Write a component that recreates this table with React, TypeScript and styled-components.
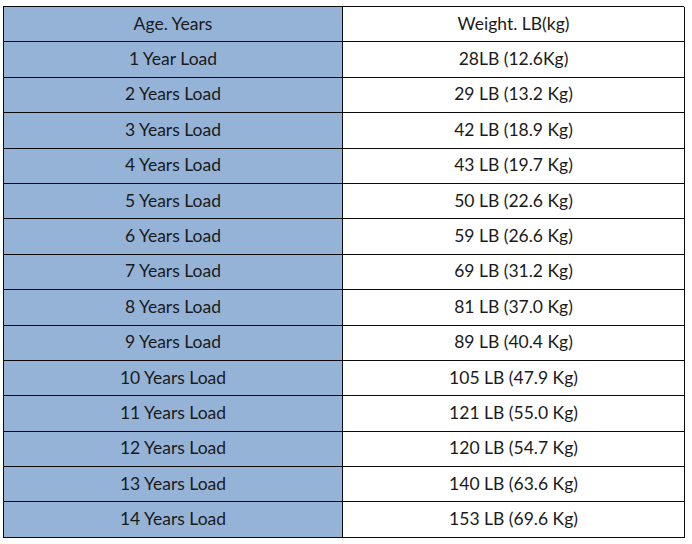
import React from "react";
import styled, { createGlobalStyle } from "styled-components";

const Global = createGlobalStyle`
  html, body { margin: 0; padding: 0; background: #fff; }
`;

const Page = styled.div`
  padding: 6px 0 0 3px;
`;

const Table = styled.div`
  display: grid;
  grid-template-columns: 339px 342px;
  grid-auto-rows: 35.4px;
  width: 681px;
  box-sizing: border-box;
  border-top: 1.5px solid #0a0a0a;
  border-left: 1.5px solid #0a0a0a;
  font-family: Lato, "Open Sans", sans-serif;
  font-size: 17.5px;
  color: #1a1a1a;
`;

const Cell = styled.div<{ $blue?: boolean }>`
  display: flex;
  align-items: center;
  justify-content: center;
  padding-bottom: 2px;
  background: ${(p) => (p.$blue ? "#95b3d7" : "#ffffff")};
  border-right: 1.5px solid #0a0a0a;
  border-bottom: 1.5px solid #0a0a0a;
  box-sizing: border-box;
`;

const rows: [string, string][] = [
  ["Age. Years", "Weight. LB(kg)"],
  ["1 Year Load", "28LB (12.6Kg)"],
  ["2 Years Load", "29 LB (13.2 Kg)"],
  ["3 Years Load", "42 LB (18.9 Kg)"],
  ["4 Years Load", "43 LB (19.7 Kg)"],
  ["5 Years Load", "50 LB (22.6 Kg)"],
  ["6 Years Load", "59 LB (26.6 Kg)"],
  ["7 Years Load", "69 LB (31.2 Kg)"],
  ["8 Years Load", "81 LB (37.0 Kg)"],
  ["9 Years Load", "89 LB (40.4 Kg)"],
  ["10 Years Load", "105 LB (47.9 Kg)"],
  ["11 Years Load", "121 LB (55.0 Kg)"],
  ["12 Years Load", "120 LB (54.7 Kg)"],
  ["13 Years Load", "140 LB (63.6 Kg)"],
  ["14 Years Load", "153 LB (69.6 Kg)"],
];

export default function App() {
  return (
    <Page>
      <Global />
      <Table>
        {rows.map(([a, b], i) => (
          <React.Fragment key={i}>
            <Cell $blue>{a}</Cell>
            <Cell>{b}</Cell>
          </React.Fragment>
        ))}
      </Table>
    </Page>
  );
}
